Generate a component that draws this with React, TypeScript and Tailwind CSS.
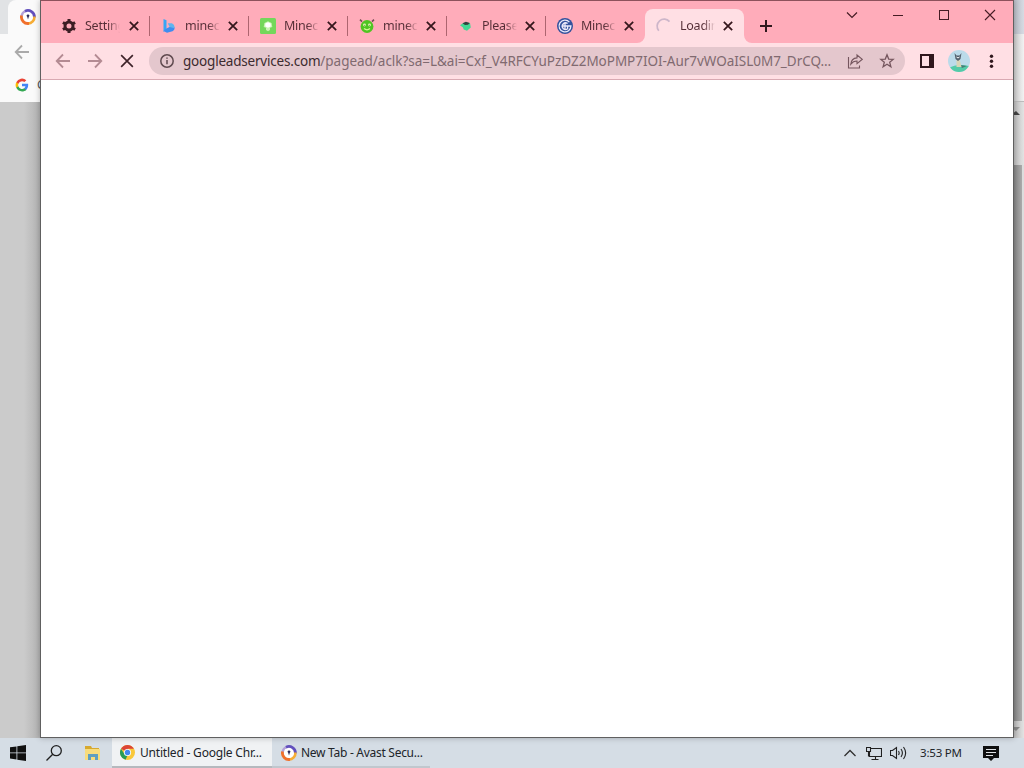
import { ReactNode } from "react";
import { clsx } from "clsx";

type Tab = {
  title: string;
  icon: ReactNode;
  active?: boolean;
  divider?: boolean;
};

function AvastIcon() {
  return (
    <svg className="h-4 w-4 shrink-0" viewBox="0 0 16 16" fill="none">
      <circle cx="8" cy="8" r="5.5" fill="white" />
      <path d="M1.6 7A6.5 6.5 0 0 1 5.5 2" stroke="#b3a0d8" strokeWidth="2.4" />
      <path d="M5 2.2A6.5 6.5 0 0 1 14.4 8.5" stroke="#6250bd" strokeWidth="2.8" />
      <path d="M14.4 7.5A6.5 6.5 0 0 1 8 14.5" stroke="#f6ad35" strokeWidth="2.6" />
      <path d="M9 14.4A6.5 6.5 0 0 1 1.6 6.5" stroke="#f0702c" strokeWidth="2.8" />
      <path d="M8 5.4a1.3 1.3 0 0 1 .8 2.4L8 10.6l-.8-2.8A1.3 1.3 0 0 1 8 5.4Z" fill="#28295c" />
    </svg>
  );
}

function GoogleIcon() {
  return (
    <svg className="h-3.5 w-3.5 shrink-0" viewBox="0 0 24 24">
      <path fill="#4285f4" d="M22.6 12.2c0-.8-.1-1.5-.2-2.2H12v4.3h5.9a5 5 0 0 1-2.2 3.3v2.8h3.6c2.1-2 3.3-4.8 3.3-8.2Z" />
      <path fill="#34a853" d="M12 23c3 0 5.5-1 7.3-2.6l-3.6-2.8a6.6 6.6 0 0 1-9.9-3.5H2.2v2.8A11 11 0 0 0 12 23Z" />
      <path fill="#fbbc05" d="M5.8 14.1a6.6 6.6 0 0 1 0-4.2V7.1H2.2a11 11 0 0 0 0 9.8l3.6-2.8Z" />
      <path fill="#ea4335" d="M12 5.4c1.6 0 3 .6 4.2 1.6l3.2-3.1A11 11 0 0 0 2.2 7.1l3.6 2.8A6.6 6.6 0 0 1 12 5.4Z" />
    </svg>
  );
}

function ArrowIcon({ className }: { className?: string }) {
  return (
    <svg className={clsx("h-4 w-4 shrink-0", className)} viewBox="0 0 16 16" fill="none" stroke="currentColor" strokeWidth="1.8">
      <path d="M15 8H2M8 1.5 1.7 8 8 14.5" />
    </svg>
  );
}

function CrossIcon({ className, strokeWidth }: { className?: string; strokeWidth: number }) {
  return (
    <svg className={clsx("shrink-0", className)} viewBox="0 0 12 12" fill="none" stroke="currentColor" strokeWidth={strokeWidth}>
      <path d="m1 1 10 10M11 1 1 11" />
    </svg>
  );
}

const TABS: Tab[] = [
  {
    title: "Settings",
    divider: true,
    icon: (
      <svg className="h-4 w-4" viewBox="0 0 16 16" fill="none" stroke="#3c1e24">
        <circle cx="8" cy="8" r="4" strokeWidth="3" />
        <path d="M8 1v3M8 12v3M1.9 4.5l2.7 1.5M11.4 10l2.7 1.5M1.9 11.5 4.6 10M11.4 6l2.7-1.5" strokeWidth="3" />
      </svg>
    ),
  },
  {
    title: "minecraft",
    divider: true,
    icon: (
      <svg className="ml-px h-4 w-4" viewBox="0 0 16 16">
        <path d="m2.5 1 3 1.2v9.2L2.5 14Z" fill="#38a6f5" />
        <path d="m2.5 13 3-2.6 5.5-2.6 2.5 1.5c.4 2-.6 3.2-2 4l-5.5 1.5Z" fill="#3f8cf0" />
        <path d="M6.8 5.2h4c1.8.7 3 2.6 2.7 5L8.6 9Z" fill="#5fb4ee" />
      </svg>
    ),
  },
  {
    title: "Minecraft",
    divider: true,
    icon: (
      <svg className="ml-px h-4 w-4" viewBox="0 0 16 16">
        <rect width="16" height="16" rx="1.5" fill="#74d75b" />
        <path d="m8 3.2 3.6 1.7.7 4-2.3.9V12L8 13.2 6 12V9.8l-2.3-.9.7-4Z" fill="#c9f3b2" />
        <path d="m8 4.2 2.7 1.3v3L8 9.8 5.3 8.5v-3Z" fill="#fff" />
      </svg>
    ),
  },
  {
    title: "minecraft",
    divider: true,
    icon: (
      <svg className="ml-px h-4 w-4" viewBox="0 0 16 16">
        <path d="m1 1.6 2 2M15 1.6l-2 2" stroke="#754b55" strokeWidth="1.5" />
        <circle cx="8" cy="8.5" r="6.4" fill="#4fc522" />
        <circle cx="5.5" cy="7" r="1.4" fill="#e4f9b4" />
        <circle cx="10.5" cy="7" r="1.4" fill="#e4f9b4" />
        <circle cx="5.7" cy="7.2" r=".5" fill="#3c7a20" />
        <circle cx="10.3" cy="7.2" r=".5" fill="#3c7a20" />
        <path d="M5 10.6q3 2.4 6 0" fill="none" stroke="#d3f894" strokeWidth="1.3" />
      </svg>
    ),
  },
  {
    title: "Please wait",
    divider: true,
    icon: (
      <svg className="ml-px h-4 w-4" viewBox="0 0 16 16">
        <path d="m2 7.2 3-2 3-.7 4 .5.8 4.5-3.8 3.2-3.3-1.2-.7-2Z" fill="#43d793" />
        <path d="m4.5 5.2 3.4-1.5 3.8 1.3L10 6.7l-3 .2Z" fill="#32413f" />
      </svg>
    ),
  },
  {
    title: "Minecraft",
    icon: (
      <svg className="ml-px h-4 w-4" viewBox="0 0 16 16" fill="none">
        <circle cx="8" cy="8" r="8" fill="#34529d" />
        <path d="M12.4 4.1A5.9 5.9 0 1 0 13.9 8H5.6M10.6 5.6A3.3 3.3 0 1 0 10.6 10.8V8M8 4.6v6.6" stroke="#eceafa" strokeWidth="1.3" />
      </svg>
    ),
  },
  {
    title: "Loading",
    active: true,
    icon: (
      <svg className="ml-px h-4 w-4" viewBox="0 0 16 16" fill="none">
        <path d="M2.8 12.7A7 7 0 0 1 13.5 3.6" stroke="#cdb6ca" strokeWidth="1.7" />
      </svg>
    ),
  },
];

function BrowserTab({ tab }: { tab: Tab }) {
  return (
    <div
      className={clsx(
        "relative flex h-[34px] w-[99px] shrink-0 items-center pl-2.5",
        tab.active && "rounded-t-lg bg-[#ffdfe4]"
      )}
    >
      {tab.icon}
      <span
        className={clsx(
          "ml-2 w-[35px] overflow-hidden whitespace-nowrap bg-linear-to-r from-[#542d35] from-65% bg-clip-text text-[12.5px] leading-5 tracking-[-0.25px] text-transparent",
          tab.active ? "to-[#ffdfe4]" : "to-[#ffacba]"
        )}
      >
        {tab.title}
      </span>
      <CrossIcon className="ml-auto mr-[11px] h-2.5 w-2.5 text-[#35161c]" strokeWidth={2.1} />
      {tab.divider && <i className="absolute right-0 top-[7px] h-5 w-px bg-[#ad6570]" />}
      {tab.active && (
        <>
          <svg className="absolute -left-2 bottom-0 h-2 w-2" viewBox="0 0 8 8">
            <path d="M8 0v8H0a8 8 0 0 0 8-8" fill="#ffdfe4" />
          </svg>
          <svg className="absolute -right-2 bottom-0 h-2 w-2" viewBox="0 0 8 8">
            <path d="M0 0v8h8a8 8 0 0 1-8-8" fill="#ffdfe4" />
          </svg>
        </>
      )}
    </div>
  );
}

function BackgroundWindow() {
  return (
    <div className="flex h-[738px] w-full justify-between bg-[#bbb]">
      <div className="flex w-10 flex-col">
        <div className="h-[34px] bg-[#e1e3e5] pl-2">
          <div className="flex h-full items-center rounded-tl-lg bg-[#fafafa] pl-3">
            <AvastIcon />
          </div>
        </div>
        <div className="flex h-[34px] items-center bg-[#fafafa] pl-3.5 pt-px">
          <ArrowIcon className="text-[#aaa]" />
        </div>
        <div className="flex h-[34px] items-center overflow-hidden bg-[#fafafa] pl-[15px]">
          <GoogleIcon />
          <span className="ml-2 text-[12px] text-[#555]">G</span>
        </div>
        <div className="grow bg-linear-to-r from-[#cbcbcb] from-60% to-[#b2b2b2]" />
      </div>
      <div className="flex w-2.5 flex-col">
        <div className="h-[34px] bg-linear-to-r from-[#b9bcc5] to-[#d7dbe3]" />
        <div className="h-[68px] border-b border-[#bbb] bg-linear-to-r from-[#ccc] to-[#f2f2f2]" />
        <div className="h-[63px] bg-linear-to-r from-[#bebebe] to-[#e3e3e3] pt-2">
          <svg className="h-1.5 w-1.5" viewBox="0 0 6 6"><path d="M-3 5 2 1l4 4Z" fill="#444" /></svg>
        </div>
        <div className="grow border-r-2 border-[#ddd] bg-linear-to-r from-[#888] to-[#aaa]" />
        <div className="h-[17px] bg-linear-to-r from-[#bbb] to-[#e3e3e3] pt-1.5">
          <svg className="h-1.5 w-1.5" viewBox="0 0 6 6"><path d="M-3 0 2 4l4-4Z" fill="#888" /></svg>
        </div>
      </div>
    </div>
  );
}

function WindowControls() {
  return (
    <div className="ml-auto flex h-7 items-center text-[#451c24]">
      <div className="flex w-[46px] justify-center">
        <svg className="h-3 w-3" viewBox="0 0 12 12" fill="none" stroke="currentColor" strokeWidth="1.2"><path d="m1 3.5 5 5 5-5" /></svg>
      </div>
      <div className="flex w-[46px] justify-center"><i className="h-px w-2.5 bg-current" /></div>
      <div className="flex w-[46px] justify-center"><i className="h-2.5 w-2.5 border border-current" /></div>
      <div className="flex w-[46px] justify-center"><CrossIcon className="h-3 w-3" strokeWidth={1.1} /></div>
    </div>
  );
}

function Toolbar() {
  return (
    <div className="flex h-[37px] items-center border-b border-[#d9a9b2] bg-[#ffdfe4] pl-3.5">
      <ArrowIcon className="text-[#b48b93]" />
      <ArrowIcon className="ml-4 rotate-180 text-[#b48b93]" />
      <CrossIcon className="ml-[17px] h-3.5 w-3.5 text-[#3d2228]" strokeWidth={1.4} />
      <div className="ml-[15px] flex h-7 w-[756px] items-center rounded-full bg-[#e4c7cd] pl-[11px] pr-2.5">
        <svg className="h-3.5 w-3.5 shrink-0" viewBox="0 0 14 14" fill="none" stroke="#5f4a4f" strokeWidth="1.5">
          <circle cx="7" cy="7" r="6.2" />
          <path d="M7 6v4.3M7 3.4v1.4" />
        </svg>
        <span className="ml-[9px] w-[650px] whitespace-nowrap pt-px text-[13.5px] tracking-[-0.03px] text-[#806a70]">
          <span className="tracking-[-0.2px] text-[#3c2b2f]">googleadservices.com</span>
          /pagead/aclk?sa=L&amp;ai=Cxf_V4RFCYuPzDZ2MoPMP7IOI-Aur7vWOaISL0M7_DrCQ...
        </span>
        <svg className="ml-[14px] h-4 w-4 shrink-0" viewBox="0 0 16 16" fill="none" stroke="#75565e" strokeWidth="1.1">
          <path d="M1.5 4v11h11v-2.5" />
          <path d="M3.8 11.2c.3-4 2.6-6 6.2-6.3V2l5.3 4.3-5.3 4.3V8c-2.8 0-4.6 1-6.2 3.2Z" />
        </svg>
        <svg className="ml-4 h-4 w-4 shrink-0" viewBox="0 0 16 16" fill="none" stroke="#75565e" strokeWidth="1.3">
          <path d="m8 1.8 1.7 4.3 4.5.3-3.5 2.9 1.2 4.5L8 11.3l-3.9 2.5 1.2-4.5-3.5-2.9 4.5-.3Z" />
        </svg>
      </div>
      <svg className="ml-[15px] h-3.5 w-3.5 shrink-0" viewBox="0 0 14 14">
        <path d="M0 0h14v14H0Zm2 2v10h7V2Z" fill="#30181d" fillRule="evenodd" />
      </svg>
      <svg className="ml-3.5 h-[22px] w-[22px] shrink-0 rounded-full bg-[#bbdbea]" viewBox="0 0 22 22">
        <path d="M1 18q8-5 20-2v6H2Z" fill="#53cba7" />
        <path d="m12 15 7 1-5 2Z" fill="#477b76" />
        <path d="m8.5 10 3-1 2 8h-5Z" fill="#d8d5b5" />
        <path d="m6.5 3 2 2.5h3l2-2.5-1 6-2.5 2-2.5-2Z" fill="#53606d" />
        <path d="m8.5 7 1.5 1 1.5-1" stroke="white" fill="none" />
      </svg>
      <svg className="ml-[13px] h-4 w-4 shrink-0" viewBox="0 0 16 16" fill="#30181d">
        <circle cx="8.5" cy="3.2" r="1.7" /><circle cx="8.5" cy="8.2" r="1.7" /><circle cx="8.5" cy="13.2" r="1.7" />
      </svg>
    </div>
  );
}

function BrowserWindow() {
  return (
    <div className="absolute left-10 top-0 flex h-[738px] w-[974px] flex-col border border-[#606060] border-t-[#8e515c] bg-white shadow-[0_0_6px_rgba(0,0,0,0.25)]">
      <div className="flex h-[42px] bg-[#ffacba] pl-2.5">
        <div className="flex pt-2">
          {TABS.map((tab, i) => (
            <BrowserTab key={i} tab={tab} />
          ))}
        </div>
        <svg className="ml-4 mt-[19px] h-3 w-3" viewBox="0 0 12 12" stroke="#30181d" strokeWidth="2">
          <path d="M6 0v12M0 6h12" />
        </svg>
        <WindowControls />
      </div>
      <Toolbar />
    </div>
  );
}

function Taskbar() {
  return (
    <div className="flex h-[30px] items-center bg-[#d5dde5] text-[12px] text-[#202429]">
      <svg className="ml-2.5 h-4 w-4 shrink-0" viewBox="0 0 16 16" fill="#101010">
        <path d="m0 2.3 6.5-.9v6.1H0ZM7.3 1.3 16 0v7.5H7.3ZM0 8.3h6.5v6.2L0 13.6ZM7.3 8.3H16V16l-8.7-1.3Z" />
      </svg>
      <svg className="ml-5 h-4 w-4 shrink-0" viewBox="0 0 16 16" fill="none" stroke="#202020" strokeWidth="1.3">
        <circle cx="10.3" cy="5.7" r="5" /><path d="m6.7 9.3-6.2 6.2" />
      </svg>
      <svg className="ml-[22px] h-4 w-[17px] shrink-0" viewBox="0 0 17 16">
        <path d="M1 1h6l1 2h7v3H1Z" fill="#d7a92f" />
        <path d="M1 4h15v11H1Z" fill="#f8dc7c" />
        <path d="M4 15V9h10v6h-3v-3H7v3Z" fill="#5f9fc0" />
      </svg>
      <div className="ml-[11px] flex h-full w-[160px] items-center border-b-2 border-[#b5b9be] bg-[#f0f2f4] pl-2 pt-px">
        <svg className="h-[15px] w-[15px] shrink-0" viewBox="0 0 16 16">
          <circle cx="8" cy="8" r="8" fill="#f9c83a" />
          <path d="M8 8 1.1 4A8 8 0 0 1 14.9 4H8Z" fill="#dc4537" />
          <path d="M1.1 4 5 10l3 1-2 4.8A8 8 0 0 1 1.1 4Z" fill="#279b57" />
          <circle cx="8" cy="8" r="3.8" fill="white" /><circle cx="8" cy="8" r="2.9" fill="#4388ed" />
        </svg>
        <span className="ml-[5px] whitespace-nowrap pt-px tracking-[-0.2px]">Untitled - Google Chr...</span>
      </div>
      <div className="flex h-full w-[158px] items-center border-b-2 border-[#c0c7ce] pl-[9px] pt-px">
        <AvastIcon />
        <span className="ml-1 whitespace-nowrap pt-px tracking-[-0.28px]">New Tab - Avast Secu...</span>
      </div>
      <div className="ml-auto flex h-full items-center pr-[25px]">
        <svg className="h-3 w-3" viewBox="0 0 12 12" fill="none" stroke="#303030" strokeWidth="1.3"><path d="m.5 9 5.5-5.5L11.5 9" /></svg>
        <svg className="ml-2.5 h-4 w-4" viewBox="0 0 16 16" fill="none" stroke="#202020" strokeWidth="1.1">
          <path d="M5 3.5h10.5v8H3.5V7M9.5 11.5V14M5.5 14.5h7M.5 2.5h4v4h-4ZM2.5 6.5v5" />
        </svg>
        <svg className="ml-2 h-4 w-[17px]" viewBox="0 0 17 16" fill="none" stroke="#202020" strokeWidth="1.1">
          <path d="M.5 5.5h2l4-3v11l-4-3h-2ZM8.5 6q1.3 2 0 4M11 4q2.8 4 0 8M13.5 2q4.3 6 0 12" />
        </svg>
        <span className="ml-[13px] w-[43px] whitespace-nowrap text-[11.5px] tracking-[-0.2px]">3:53 PM</span>
        <svg className="ml-[20px] h-[17px] w-4" viewBox="0 0 16 17">
          <path d="M0 1h16v12H11l-3 3-3-3H0Z" fill="#101010" />
          <path d="M3 4.5h10M3 7.5h10M3 10.5h7" stroke="#e0e3e6" />
        </svg>
      </div>
    </div>
  );
}

export default function App() {
  return (
    <div className="relative h-[768px] w-[1024px] overflow-hidden font-['Noto_Sans',sans-serif]">
      <BackgroundWindow />
      <BrowserWindow />
      <Taskbar />
    </div>
  );
}
